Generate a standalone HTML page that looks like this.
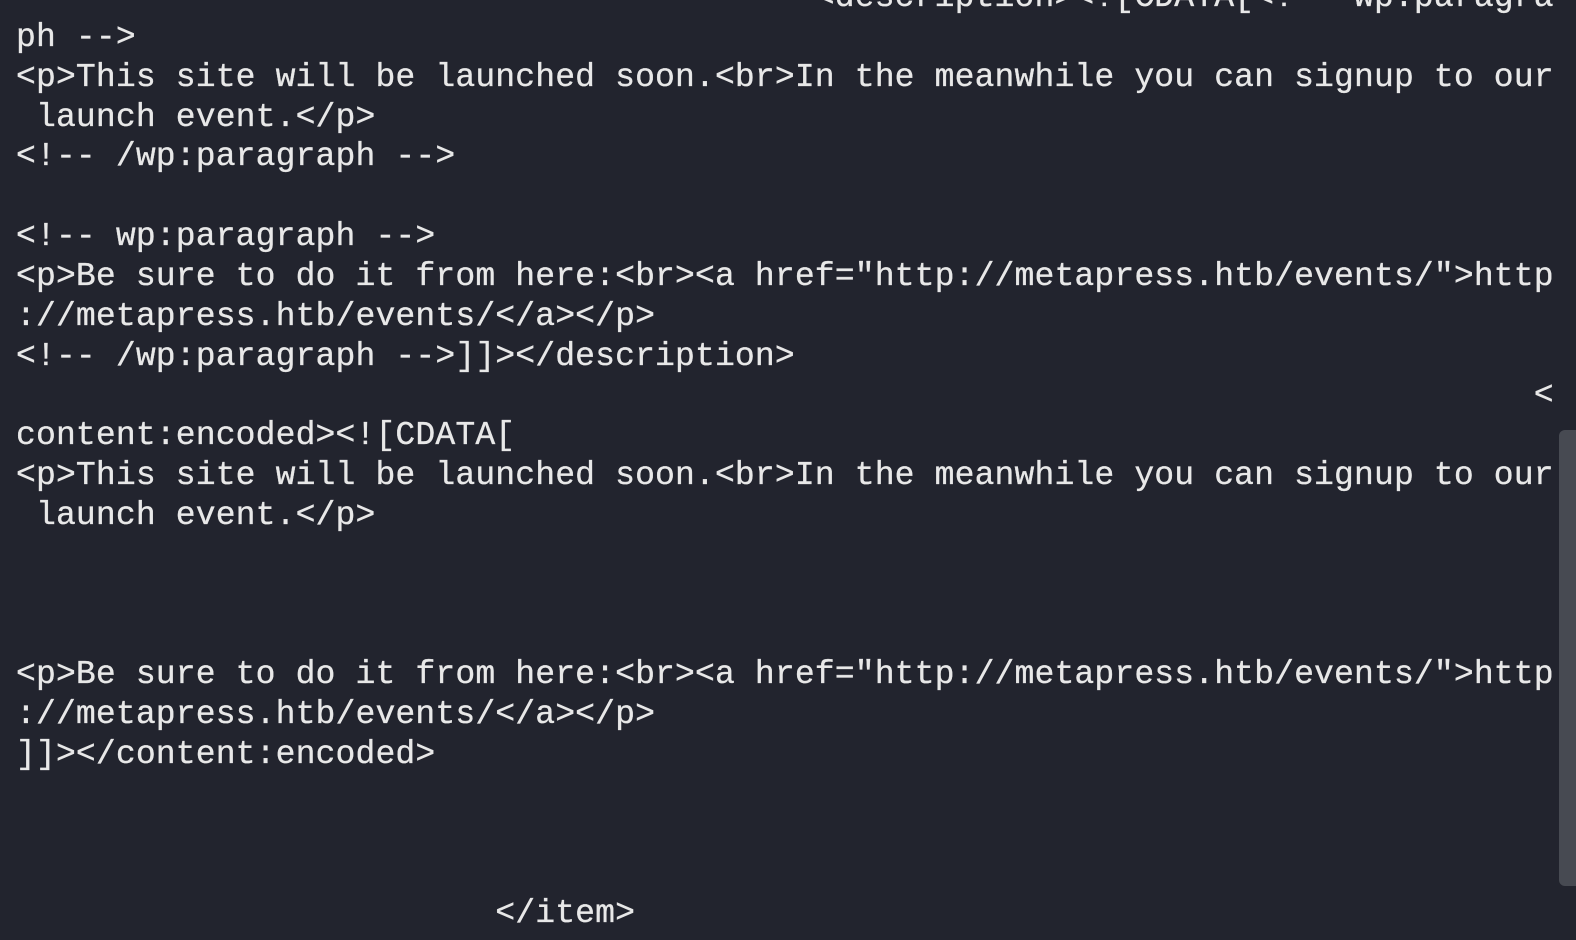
<!DOCTYPE html>
<html><head><meta charset="utf-8"><style>
html,body{margin:0;padding:0;width:1576px;height:940px;overflow:hidden;background:#22242e;}
pre{position:absolute;left:16px;top:-22px;margin:0;font-family:"Liberation Mono",monospace;font-size:33.1px;letter-spacing:0.12px;line-height:39.85px;color:#e8e8e8;white-space:pre;-webkit-text-stroke:0.3px #e8e8e8;}
.sb{position:absolute;left:1559px;top:430px;width:17px;height:456px;background:#474a52;border-radius:6px 0 0 6px;}
</style></head><body>
<pre>                                        &lt;description&gt;&lt;![CDATA[&lt;!-- wp:paragra
ph --&gt;
&lt;p&gt;This site will be launched soon.&lt;br&gt;In the meanwhile you can signup to our
 launch event.&lt;/p&gt;
&lt;!-- /wp:paragraph --&gt;

&lt;!-- wp:paragraph --&gt;
&lt;p&gt;Be sure to do it from here:&lt;br&gt;&lt;a href="http://metapress.htb/events/"&gt;http
://metapress.htb/events/&lt;/a&gt;&lt;/p&gt;
&lt;!-- /wp:paragraph --&gt;]]&gt;&lt;/description&gt;
                                                                            &lt;
content:encoded&gt;&lt;![CDATA[
&lt;p&gt;This site will be launched soon.&lt;br&gt;In the meanwhile you can signup to our
 launch event.&lt;/p&gt;



&lt;p&gt;Be sure to do it from here:&lt;br&gt;&lt;a href="http://metapress.htb/events/"&gt;http
://metapress.htb/events/&lt;/a&gt;&lt;/p&gt;
]]&gt;&lt;/content:encoded&gt;



                        &lt;/item&gt;
</pre>
<div class="sb"></div>
</body></html>
